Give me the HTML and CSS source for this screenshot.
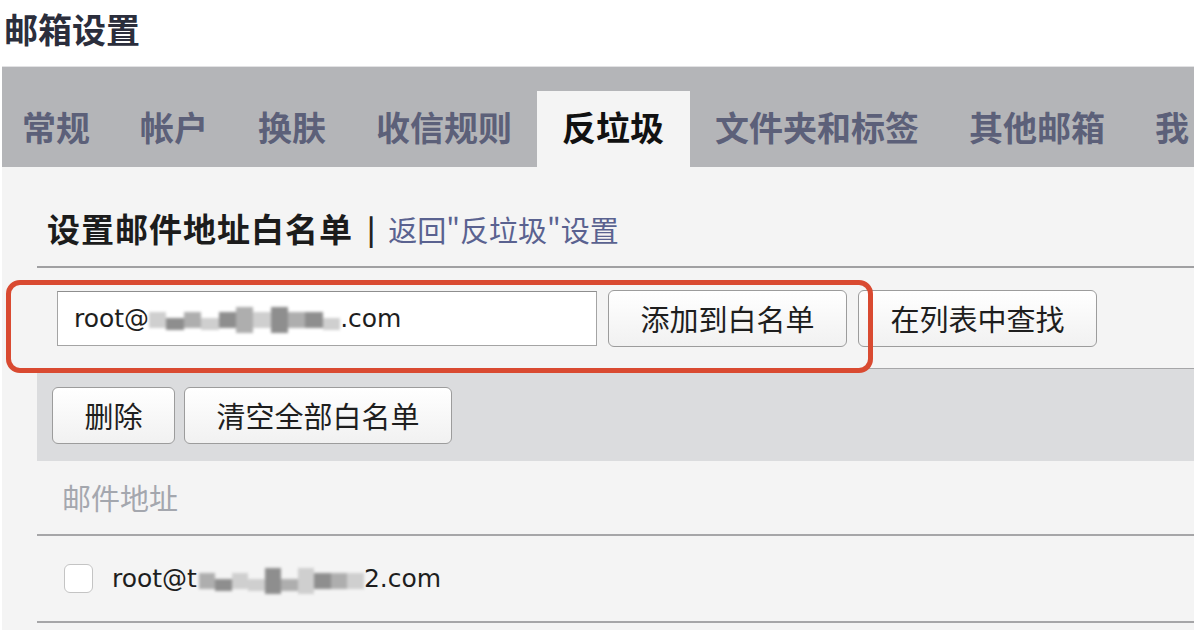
FILE: index.html
```html
<!DOCTYPE html>
<html lang="zh-CN">
<head>
<meta charset="utf-8">
<title>邮箱设置</title>
<link rel="stylesheet" href="styles.css">
</head>
<body>
<div class="page">
  <header class="title-bar">
    <h1 class="title">邮箱设置</h1>
  </header>
  <nav class="tabs">
    <span class="tab tab-first">常规</span>
    <span class="tab">帐户</span>
    <span class="tab">换肤</span>
    <span class="tab">收信规则</span>
    <span class="tab tab-active">反垃圾</span>
    <span class="tab">文件夹和标签</span>
    <span class="tab">其他邮箱</span>
    <span class="tab">我</span>
  </nav>
  <main class="content">
    <div class="section-head">
      <span class="section-title">设置邮件地址白名单</span>
      <span class="sep">|</span>
      <a class="back-link">返回"反垃圾"设置</a>
    </div>
    <div class="add-row">
      <div class="text-input">
        <span class="email">root@</span>
        <span class="mosaic mosaic-input">
          <i class="c l mid"></i><i class="c d low"></i><i class="c m mid"></i><i class="c l low"></i><i class="c d mid"></i><i class="c m tall"></i><i class="c l mid"></i><i class="c d tall"></i><i class="c m mid"></i><i class="c d mid"></i><i class="c l low"></i>
        </span>
        <span class="email">.com</span>
      </div>
      <button class="btn btn-wide">添加到白名单</button>
      <button class="btn btn-wide">在列表中查找</button>
      <div class="highlight"></div>
    </div>
    <div class="toolbar">
      <button class="btn btn-del">删除</button>
      <button class="btn btn-clear">清空全部白名单</button>
    </div>
    <div class="list-head">邮件地址</div>
    <div class="list-row">
      <span class="checkbox"></span>
      <span class="email">root@t</span>
      <span class="mosaic mosaic-row">
        <i class="c m mid"></i><i class="c d low"></i><i class="c l mid"></i><i class="c l low"></i><i class="c d tall"></i><i class="c m low"></i><i class="c l tall"></i><i class="c d mid"></i><i class="c m mid"></i><i class="c l mid"></i>
      </span>
      <span class="email">2.com</span>
    </div>
  </main>
</div>
</body>
</html>
```
FILE: styles.css
```css
* { box-sizing: border-box; }
html, body { margin: 0; padding: 0; background: #ffffff; }
body {
  font-family: "Noto Sans CJK SC", "Liberation Sans", sans-serif;
  color: #222;
  overflow: hidden;
  width: 1194px;
  height: 630px;
}
.page {
  margin-left: 2px;
  display: flex;
  flex-direction: column;
}
.title-bar {
  height: 67px;
  border-bottom: 1px solid #e2e2e4;
}
.title {
  margin: 0;
  padding-left: 2px;
  font-size: 34px;
  line-height: 58px;
  font-weight: 700;
  color: #2b2e3c;
}
.tabs {
  height: 100px;
  background: #b4b5b8;
  display: flex;
  align-items: flex-end;
  white-space: nowrap;
  overflow: hidden;
}
.tab {
  height: 76px;
  line-height: 72px;
  padding: 0 25px;
  font-size: 34px;
  font-weight: 700;
  color: #5c6079;
  flex: none;
}
.tab-first { padding-left: 20px; }
.tab-active {
  background: #f4f4f4;
  color: #111;
  padding: 0 26px 0 25px;
}
.content {
  background: #f4f4f4;
  padding-left: 35px;
  position: relative;
  height: 463px;
}
.section-head {
  height: 101px;
  padding: 22px 0 0 10px;
  display: flex;
  align-items: center;
  border-bottom: 2px solid #a0a0a2;
}
.section-title {
  font-size: 33px;
  font-weight: 700;
  color: #1c1c1c;
  letter-spacing: 1px;
}
.sep {
  font-size: 28px;
  font-weight: 700;
  color: #222;
  margin: 0 13px 0 14px;
}
.back-link {
  font-size: 29px;
  color: #5a6290;
  margin-top: 2px;
}
.add-row {
  height: 101px;
  display: flex;
  align-items: center;
  gap: 11px;
  padding-left: 20px;
  border-bottom: 1px solid #a6a6a8;
}
.text-input {
  width: 540px;
  height: 55px;
  background: #fff;
  border: 1px solid #a4a4a4;
  border-top-color: #8e8e8e;
  padding-left: 16px;
  display: flex;
  align-items: center;
  white-space: nowrap;
  overflow: hidden;
}
.email {
  font-family: "DejaVu Sans", "Liberation Sans", sans-serif;
  font-size: 25px;
  color: #1e1e1e;
}
.mosaic {
  display: inline-flex;
  align-items: center;
  height: 30px;
  filter: blur(1.5px);
  flex: none;
}
.mosaic-input { width: 191px; }
.mosaic-row { width: 165px; margin-left: 2px; }
.c {
  display: block;
  flex: 1;
  height: 14px;
}
.c.l { background: #cfcfcf; }
.c.m { background: #aeaeae; }
.c.d { background: #8e8e8e; }
.c.low { height: 12px; margin-top: 12px; }
.c.mid { height: 16px; margin-top: 4px; }
.c.tall { height: 26px; margin-top: 4px; }
.btn {
  height: 57px;
  font-family: "Noto Sans CJK SC", sans-serif;
  font-size: 29px;
  color: #1e1e1e;
  background: linear-gradient(#ffffff, #f1f1f1);
  border: 1px solid #9c9c9c;
  border-radius: 6px;
  padding: 0;
  flex: none;
}
.btn-wide { width: 239px; }
.highlight {
  position: absolute;
  left: 4px;
  top: 113px;
  width: 867px;
  height: 93px;
  border: 5px solid #d94a31;
  border-radius: 14px;
  pointer-events: none;
}
.toolbar {
  height: 92px;
  background: #dbdcde;
  display: flex;
  align-items: center;
  gap: 9px;
  padding-left: 15px;
}
.btn-del { width: 123px; }
.btn-clear { width: 268px; }
.list-head {
  height: 75px;
  border-bottom: 2px solid #a6a6a8;
  padding-left: 25px;
  font-size: 29px;
  line-height: 72px;
  color: #a4a7ae;
}
.list-row {
  height: 87px;
  border-bottom: 2px solid #a6a6a8;
  display: flex;
  align-items: center;
  padding-left: 27px;
  white-space: nowrap;
}
.checkbox {
  width: 29px;
  height: 29px;
  background: #fff;
  border: 1px solid #c4c4c4;
  border-radius: 6px;
  margin-right: 19px;
  flex: none;
}
```
